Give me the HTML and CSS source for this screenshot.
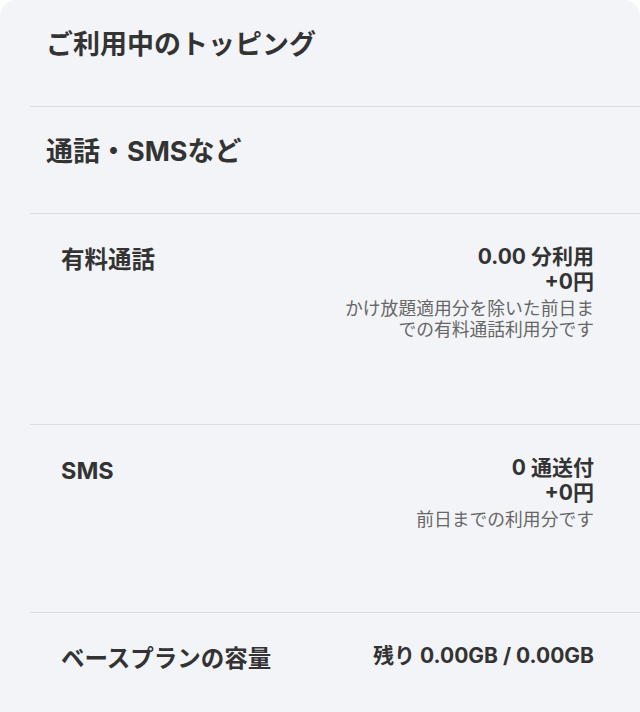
FILE: index.html
```html
<!DOCTYPE html>
<html lang="ja">
<head>
<meta charset="utf-8">
<link rel="stylesheet" href="styles.css">
</head>
<body>
<div class="card">
  <div class="section">
    <h2 class="section-title">ご利用中のトッピング</h2>
  </div>
  <div class="section">
    <h2 class="section-title">通話・SMSなど</h2>
  </div>
  <div class="row row-call">
    <div class="label">有料通話</div>
    <div class="value">
      <div class="amount">0.00 分利用</div>
      <div class="amount">+0円</div>
      <div class="note">かけ放題適用分を除いた前日までの有料通話利用分です</div>
    </div>
  </div>
  <div class="row row-sms">
    <div class="label">SMS</div>
    <div class="value">
      <div class="amount">0 通送付</div>
      <div class="amount">+0円</div>
      <div class="note">前日までの利用分です</div>
    </div>
  </div>
  <div class="row">
    <div class="label">ベースプランの容量</div>
    <div class="value">
      <div class="amount">残り 0.00GB / 0.00GB</div>
    </div>
  </div>
</div>
</body>
</html>
```
FILE: styles.css
```css
html, body {
  margin: 0;
  padding: 0;
  background: #ffffff;
}
body {
  font-family: "Inter", "Noto Sans CJK JP", sans-serif;
  color: #333333;
}
.card {
  background: #f3f4f8;
  border-radius: 16px 16px 0 0;
  min-height: 712px;
  padding-left: 30px;
}
.section {
  height: 107px;
  box-sizing: border-box;
  padding: 26px 0 0 16px;
  border-bottom: 1px solid #dcdde1;
}
.section-title {
  margin: 0;
  font-size: 27px;
  font-weight: 700;
  line-height: 38px;
  color: #333333;
}
.row {
  display: flex;
  justify-content: space-between;
  align-items: flex-start;
  padding: 30px 46px 0 31px;
  box-sizing: border-box;
}
.row-call {
  height: 211px;
  border-bottom: 1px solid #dcdde1;
}
.row-sms {
  height: 188px;
  border-bottom: 1px solid #dcdde1;
}
.label {
  font-size: 23.5px;
  font-weight: 700;
  line-height: 32px;
}
.value {
  text-align: right;
  max-width: 252px;
}
.amount {
  font-size: 21px;
  font-weight: 700;
  line-height: 25px;
}
.note {
  font-size: 17.8px;
  line-height: 21px;
  color: #666666;
  margin-top: 4px;
}
```
